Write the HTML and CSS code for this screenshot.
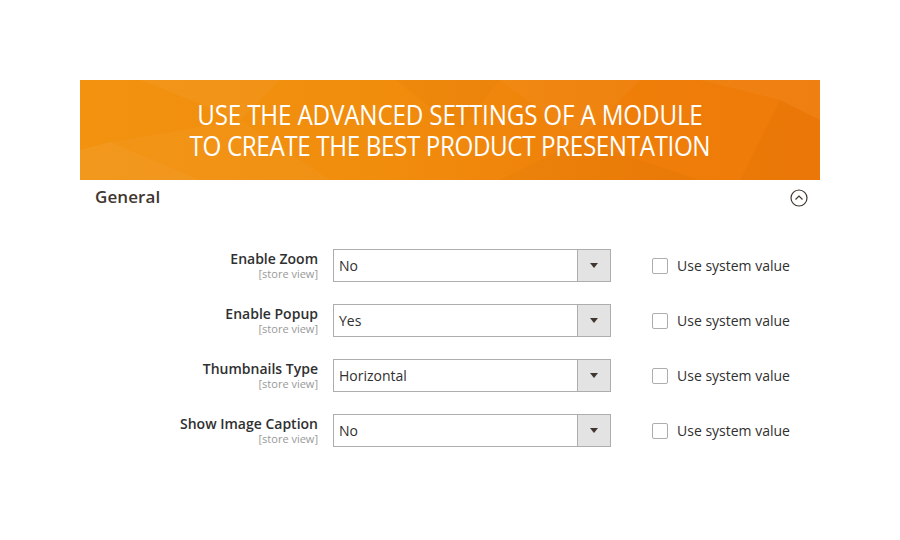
FILE: index.html
```html
<!DOCTYPE html>
<html>
<head>
<meta charset="utf-8">
<link rel="stylesheet" href="styles.css">
</head>
<body>
<div class="page">
  <div class="banner">
    <svg class="facets" width="740" height="100" viewBox="0 0 740 100" preserveAspectRatio="none">
      <polygon points="0,70 30,62 120,100 0,100" fill="#ffffff" opacity="0.06"/>
      <polygon points="30,62 160,40 250,100 120,100" fill="#ffffff" opacity="0.03"/>
      <polygon points="60,0 200,0 160,40" fill="#ffffff" opacity="0.04"/>
      <polygon points="420,0 560,0 500,60" fill="#ffffff" opacity="0.03"/>
      <polygon points="500,60 620,100 420,100" fill="#000000" opacity="0.02"/>
      <polygon points="620,0 740,0 740,40 700,20" fill="#ffffff" opacity="0.04"/>
      <polygon points="700,20 740,40 740,100 660,100" fill="#000000" opacity="0.02"/>
      <polygon points="315,0 420,0 380,50" fill="#000000" opacity="0.015"/>
    </svg>
    <div class="banner-text">
      <div class="line">USE THE ADVANCED SETTINGS OF A MODULE</div>
      <div class="line line2">TO CREATE THE BEST PRODUCT PRESENTATION</div>
    </div>
  </div>
  <div class="section-head">
    <span class="section-title">General</span>
    <svg class="collapse" width="18" height="18" viewBox="0 0 18 18">
      <circle cx="9" cy="9" r="8" fill="none" stroke="#41362f" stroke-width="1.2"/>
      <path d="M5.5 10.5 L9 7 L12.5 10.5" fill="none" stroke="#41362f" stroke-width="1.2"/>
    </svg>
  </div>
  <div class="form">
    <div class="row">
      <div class="label"><div class="name">Enable Zoom</div><div class="scope">[store view]</div></div>
      <div class="select"><span class="value">No</span><span class="btn"><span class="arrow"></span></span></div>
      <div class="sys"><span class="box"></span><span class="sys-label">Use system value</span></div>
    </div>
    <div class="row">
      <div class="label"><div class="name">Enable Popup</div><div class="scope">[store view]</div></div>
      <div class="select"><span class="value">Yes</span><span class="btn"><span class="arrow"></span></span></div>
      <div class="sys"><span class="box"></span><span class="sys-label">Use system value</span></div>
    </div>
    <div class="row">
      <div class="label"><div class="name">Thumbnails Type</div><div class="scope">[store view]</div></div>
      <div class="select"><span class="value">Horizontal</span><span class="btn"><span class="arrow"></span></span></div>
      <div class="sys"><span class="box"></span><span class="sys-label">Use system value</span></div>
    </div>
    <div class="row">
      <div class="label"><div class="name">Show Image Caption</div><div class="scope">[store view]</div></div>
      <div class="select"><span class="value">No</span><span class="btn"><span class="arrow"></span></span></div>
      <div class="sys"><span class="box"></span><span class="sys-label">Use system value</span></div>
    </div>
  </div>
</div>
</body>
</html>
```

FILE: styles.css
```css
* { box-sizing: border-box; }
html, body { margin: 0; padding: 0; background: #ffffff; }
body {
  font-family: "Open Sans", "Noto Sans", sans-serif;
  color: #303030;
  width: 900px;
  height: 540px;
  overflow: hidden;
}
.page {
  width: 740px;
  margin: 80px 0 0 80px;
}
.banner {
  position: relative;
  height: 100px;
  background: linear-gradient(90deg, #f2920f 0%, #f18d0d 40%, #ef7e09 75%, #ef7a08 100%);
  display: flex;
  align-items: center;
  justify-content: center;
  overflow: hidden;
}
.facets {
  position: absolute;
  left: 0;
  top: 0;
}
.banner-text {
  position: relative;
  color: #ffffff;
  font-family: "Open Sans", sans-serif;
  font-size: 28px;
  line-height: 31px;
  text-align: center;
  transform: scaleX(0.865);
  margin-top: -1px;
  letter-spacing: -0.2px;
}
.line { white-space: nowrap; }
.line2 { letter-spacing: -0.45px; }
.section-head {
  display: flex;
  align-items: center;
  justify-content: space-between;
  height: 34px;
  padding: 0 12px 0 15px;
}
.section-title {
  font-size: 17px;
  font-weight: 600;
  color: #41362f;
  letter-spacing: 0.1px;
  margin-top: -1px;
}
.collapse { display: block; margin-top: 2px; }
.form {
  padding-top: 35px;
  display: flex;
  flex-direction: column;
  gap: 22px;
}
.row {
  display: flex;
  align-items: flex-start;
}
.label {
  width: 238px;
  text-align: right;
}
.name {
  font-size: 14px;
  font-weight: 600;
  line-height: 19px;
  color: #303030;
}
.scope {
  font-size: 11px;
  line-height: 12px;
  color: #999999;
}
.select {
  margin-left: 15px;
  width: 278px;
  height: 33px;
  border: 1px solid #adadad;
  display: flex;
  align-items: center;
  background: #ffffff;
}
.value {
  flex: 1;
  padding-left: 5px;
  font-size: 14px;
  color: #303030;
}
.btn {
  width: 33px;
  height: 31px;
  background: #e3e3e3;
  border-left: 1px solid #adadad;
  display: flex;
  align-items: center;
  justify-content: center;
}
.arrow {
  width: 0;
  height: 0;
  border-left: 4px solid transparent;
  border-right: 4px solid transparent;
  border-top: 5px solid #41362f;
}
.sys {
  margin-left: 41px;
  height: 33px;
  display: flex;
  align-items: center;
}
.box {
  width: 16px;
  height: 16px;
  border: 1px solid #adadad;
  border-radius: 2px;
  background: #ffffff;
  margin-top: 1px;
}
.sys-label {
  margin-left: 9px;
  font-size: 14px;
  color: #303030;
}
```
